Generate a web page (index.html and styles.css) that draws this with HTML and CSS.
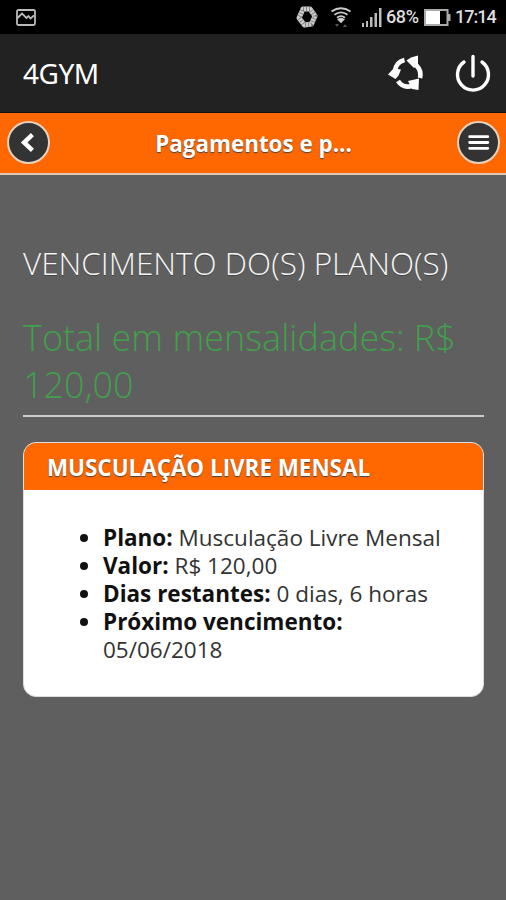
FILE: index.html
```html
<!DOCTYPE html>
<html lang="pt-br">
    <head>
        <meta charset="utf-8">
        <title>4GYM</title>
        <link rel="stylesheet" href="styles.css">
    </head>

    <body>
        <!-- status bar -->
        <div class="statusbar">
            <svg class="picture" width="20" height="17" viewBox="0 0 20 17">
                <rect x="1" y="1" width="18" height="15" rx="1.5"/>
                <path d="M1.5 9 L6 4.5 L10.5 9 L12.5 7 L14.5 9.5 L18 6.5"/>
            </svg>
            <div class="status-right">
                <svg class="sync" width="24" height="24" viewBox="0 0 24 24">
                    <path d="M8 4 H15 L20 11 L16.5 19 L9.5 20 L4 13 Z"/>
                    <path class="dark" d="M8 4 H15 L20 11 L16.5 19 L9.5 20 L4 13 Z"/>
                </svg>
                <svg class="wifi" width="22" height="21" viewBox="0 0 22 21">
                    <path d="M1.5 4.5 Q11 -2 20.5 4.5 M4.5 7.8 Q11 3 17.5 7.8 M7 10.8 Q11 7.5 15 10.8"/>
                    <path class="full" d="M8.5 12.5 Q11 11 13.5 12.5 L11 15 Z"/>
                    <path class="arrows" d="M5 17 h4 l-2 3z M13 20 h4 l-2 -3z"/>
                </svg>
                <svg class="signal" width="21" height="19" viewBox="0 0 21 19">
                    <path d="M1 15h2v4h-2z M5 13h2v6h-2z M9 9h2.5v10h-2.5z M13.5 5h2.5v14h-2.5z M18 0h2.5v19h-2.5z"/>
                </svg>
                <span class="percent">68%</span>
                <svg class="battery" width="27" height="17" viewBox="0 0 27 17">
                    <rect class="frame" x="1" y="1" width="22.5" height="15"/>
                    <rect class="level" x="2" y="2" width="14" height="13"/>
                    <rect class="tip" x="24" y="5" width="2.5" height="7"/>
                </svg>
                <span class="clock">17:14</span>
            </div>
        </div>

        <!-- app bar -->
        <div class="appbar">
            <span class="brand">4GYM</span>
            <svg class="refresh" width="36" height="36" viewBox="0 0 36 36">
                <path class="arc" d="M16.5 5 Q8 7 7 16"/>
                <path d="M0 19.5 L5.5 13.5 L13 14.5 L10.5 20.5 L7.5 24 Z"/>
                <path class="arc" d="M26 8.5 Q34 14 32 23"/>
                <path d="M18.5 5.5 L23 2.5 L30 0.5 L30 10 L26 13 Z"/>
                <path class="arc" d="M10 26 Q15 33.5 24 31"/>
                <path d="M20 26 L31 23.5 L30.5 35 L24 34 Z"/>
            </svg>
            <svg class="power" width="36" height="38" viewBox="0 0 36 38">
                <path d="M9 8 A15.5 15.5 0 1 0 27 8 M18 2.5 V22"/>
            </svg>
        </div>

        <!-- page header -->
        <div class="header">
            <a class="round">
                <svg width="40" height="40" viewBox="0 0 40 40"><path d="M24 12 L15.5 20 L24 28"/></svg>
            </a>
            <h1>Pagamentos e p...</h1>
            <a class="round">
                <svg width="40" height="40" viewBox="0 0 40 40"><path class="menu" d="M11 14 H29.5 M11 20 H29.5 M11 26 H29.5"/></svg>
            </a>
        </div>

        <div class="content">
            <h2>VENCIMENTO DO(S) PLANO(S)</h2>
            <p class="total">Total em mensalidades: R$ 120,00</p>

            <div class="card">
                <h3>MUSCULAÇÃO LIVRE MENSAL</h3>
                <ul>
                    <li><b>Plano:</b> Musculação Livre Mensal</li>
                    <li><b>Valor:</b> R$ 120,00</li>
                    <li><b>Dias restantes:</b> 0 dias, 6 horas</li>
                    <li><b>Próximo vencimento:</b> 05/06/2018</li>
                </ul>
            </div>
        </div>
    </body>
</html>
```

FILE: styles.css
```css
* {
    box-sizing: border-box;
}

body {
    margin: 0;
    height: 900px;
    overflow: hidden;
    background-color: #5f5f5f;
    font-family: "Open Sans", sans-serif;
}

h1, h2, h3, p, ul {
    margin: 0;
    padding: 0;
}

svg {
    display: block;
    fill: none;
    flex: none;
}

.statusbar {
    display: flex;
    justify-content: space-between;
    align-items: center;
    height: 34px;
    padding: 0 10px 0 16px;
    background-color: #000;
    color: #ddd;
    font-family: Roboto, sans-serif;
    font-size: 18px;
    font-weight: 500;
    line-height: 36px;
}

.status-right {
    display: flex;
    align-items: center;
}

.picture {
    stroke: #bbb;
    stroke-width: 1.8;
}

.sync {
    stroke: #ccc;
    stroke-width: 5;
    stroke-linejoin: round;
    margin-right: 11px;
}

.sync .dark {
    stroke: #777;
    stroke-dasharray: 0.8 2.2;
}

.wifi {
    stroke: #ccc;
    stroke-width: 1.8;
    margin-right: 9px;
}

.wifi .full {
    fill: #fff;
}

.wifi .arrows {
    fill: #555;
    stroke: none;
}

.signal {
    fill: #bbb;
    margin-right: 4px;
}

.percent {
    width: 38px;
    letter-spacing: -0.4px;
}

.battery {
    margin-right: 4px;
}

.battery .frame {
    stroke: #aaa;
    stroke-width: 2;
}

.battery .level {
    fill: #fff;
}

.battery .tip {
    fill: #aaa;
}

.clock {
    width: 41px;
    letter-spacing: -1px;
}

.appbar {
    display: flex;
    align-items: center;
    height: 79px;
    padding: 0 15px 0 23px;
    background-color: #222;
    border-bottom: 1px solid #111;
    color: #fff;
}

.brand {
    flex: 1;
    font-family: "Noto Sans", sans-serif;
    font-size: 28px;
    letter-spacing: -0.5px;
}

.refresh {
    fill: #fff;
    margin-right: 31px;
}

.refresh .arc {
    fill: none;
    stroke: #fff;
    stroke-width: 4.6;
}

.power {
    stroke: #fff;
    stroke-width: 3.4;
    stroke-linecap: round;
}

.header {
    display: flex;
    justify-content: space-between;
    align-items: center;
    height: 62px;
    padding: 0 6px 2px 7px;
    background-color: #ff6700;
    border-bottom: 2px solid #ddc9b8;
}

.header h1 {
    padding-top: 3px;
    color: #fff;
    font-size: 22.4px;
    font-weight: 700;
    text-shadow: 0 1px 1px #444;
}

.round {
    width: 43px;
    height: 43px;
    border: 2px solid #e8d3c0;
    border-radius: 50%;
    background-color: #333;
}

.round svg {
    width: 39px;
    height: 39px;
    stroke: #fff;
    stroke-width: 4.6;
}

.round .menu {
    stroke-width: 3;
    stroke-linecap: round;
}

.content {
    padding: 66px 22px 0 23px;
}

.content h2 {
    color: #f4f4f4;
    font-size: 31.5px;
    font-weight: 300;
    line-height: 44px;
    white-space: nowrap;
    text-shadow: 0 1px 0 #444;
}

.total {
    margin-top: 29px;
    padding-bottom: 7px;
    border-bottom: 2px solid #ccc;
    color: #41a04b;
    font-size: 36px;
    font-weight: 300;
    line-height: 47px;
}

.card {
    height: 255px;
    margin-top: 25px;
    border: 1px solid #ddd;
    border-radius: 13px;
    background-color: #fff;
    overflow: hidden;
}

.card h3 {
    height: 47px;
    padding-left: 23px;
    background-color: #ff6700;
    color: #fff;
    font-size: 22.4px;
    font-weight: 700;
    line-height: 50px;
    text-shadow: 0 1px 1px #444;
}

.card ul {
    padding: 34px 20px 0 79px;
    color: #333;
    font-size: 22.5px;
    font-weight: 400;
    line-height: 28px;
}

.card li::marker {
    color: #111;
}

.card b {
    color: #111;
    font-weight: 700;
}
```
